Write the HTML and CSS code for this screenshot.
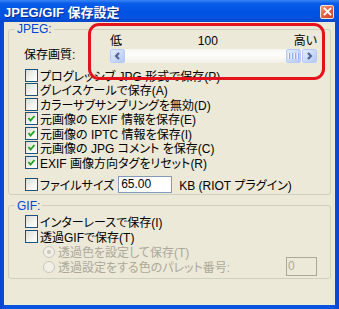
FILE: index.html
```html
<!DOCTYPE html>
<html lang="ja">
<head>
  <meta charset="UTF-8" />
  <title>JPEG/GIF 保存設定</title>
  <link rel="stylesheet" href="styles.css">
</head>
<body>
  <div class="window">
    <div class="titlebar">
      <span class="title">JPEG/GIF 保存設定</span>
      <span class="close">
        <svg width="9" height="9" viewBox="0 0 9 9"><path d="M1.5 1.5 L7.5 7.5 M7.5 1.5 L1.5 7.5" stroke="#fff" stroke-width="1.8" stroke-linecap="square"/></svg>
      </span>
    </div>

    <div class="client">
      <fieldset class="group jpeg">
        <legend>JPEG:</legend>

        <div class="quality">
          <span class="quality-label">保存画質:</span>
          <div class="slider">
            <div class="scale">
              <span>低</span>
              <span>100</span>
              <span>高い</span>
            </div>
            <div class="scrollbar">
              <span class="sb-btn">
                <svg width="7" height="8" viewBox="0 0 7 8"><path d="M5 1 L2 4 L5 7" fill="none" stroke="#4d6185" stroke-width="2"/></svg>
              </span>
              <span class="sb-track"></span>
              <span class="sb-thumb"><i></i><i></i><i></i><i></i></span>
              <span class="sb-btn">
                <svg width="7" height="8" viewBox="0 0 7 8"><path d="M2 1 L5 4 L2 7" fill="none" stroke="#4d6185" stroke-width="2"/></svg>
              </span>
            </div>
          </div>
        </div>

        <div class="check"><span class="box"></span>プログレッシブ JPG 形式で保存(P)</div>
        <div class="check"><span class="box"></span>グレイスケールで保存(A)</div>
        <div class="check"><span class="box"></span>カラーサブサンプリングを無効(D)</div>
        <div class="check"><span class="box checked"><svg width="11" height="11" viewBox="0 0 11 11"><path d="M2.5 5 L4.5 7.5 L8.5 3" fill="none" stroke="#21a121" stroke-width="1.8"/></svg></span>元画像の EXIF 情報を保存(E)</div>
        <div class="check"><span class="box checked"><svg width="11" height="11" viewBox="0 0 11 11"><path d="M2.5 5 L4.5 7.5 L8.5 3" fill="none" stroke="#21a121" stroke-width="1.8"/></svg></span>元画像の IPTC 情報を保存(I)</div>
        <div class="check"><span class="box checked"><svg width="11" height="11" viewBox="0 0 11 11"><path d="M2.5 5 L4.5 7.5 L8.5 3" fill="none" stroke="#21a121" stroke-width="1.8"/></svg></span>元画像の JPG コメント を保存(C)</div>
        <div class="check"><span class="box checked"><svg width="11" height="11" viewBox="0 0 11 11"><path d="M2.5 5 L4.5 7.5 L8.5 3" fill="none" stroke="#21a121" stroke-width="1.8"/></svg></span>EXIF 画像方向タグをリセット(R)</div>
        <div class="check filesize"><span class="box"></span><span>ファイルサイズ</span><span class="textbox">65.00</span><span class="unit">KB (RIOT プラグイン)</span></div>
      </fieldset>

      <fieldset class="group gif">
        <legend>GIF:</legend>
        <div class="check first"><span class="box"></span>インターレースで保存(I)</div>
        <div class="check"><span class="box"></span>透過GIFで保存(T)</div>
        <div class="radio disabled"><span class="dot selected"></span>透過色を設定して保存(T)</div>
        <div class="radio disabled"><span class="dot"></span>透過設定をする色のパレット番号:<span class="textbox small">0</span></div>
      </fieldset>
    </div>

    <div class="annotation"></div>
  </div>
</body>
</html>
```

FILE: styles.css
```css
body {
  margin: 0;
  font-family: "Liberation Sans", "Noto Sans CJK JP", sans-serif;
  font-size: 12px;
  font-feature-settings: "palt";
  color: #000;
  background: #fff;
}

.window {
  width: 339px;
  height: 309px;
  display: flex;
  flex-direction: column;
  position: relative;
  background: linear-gradient(90deg, #0846d0 0%, #0a52e0 2%, #0a52e0 98%, #0846d0 100%);
  box-sizing: border-box;
}

.titlebar {
  height: 22px;
  display: flex;
  align-items: center;
  justify-content: space-between;
  padding: 0 5px 0 4px;
  background: linear-gradient(#3a86f4 0%, #0a5ce9 15%, #0054e3 55%, #0050dc 85%, #0a48c8 100%);
}

.title {
  color: #fff;
  font-size: 13px;
  font-weight: 700;
  text-shadow: 1px 1px 0 #0a2a8a;
}

.close {
  width: 14px;
  height: 14px;
  box-sizing: border-box;
  border: 1px solid #f4e4dc;
  border-radius: 2px;
  background: linear-gradient(135deg, #f0a080 0%, #e0603e 50%, #c8442a 100%);
  display: flex;
  align-items: center;
  justify-content: center;
  margin-top: 1px;
}

.client {
  flex: 1;
  margin: 0 4px 4px 4px;
  background: #ece9d8;
  padding-top: 1px;
}

.group {
  margin: 0 4px 0 4px;
  border: 1px solid #d0d0bf;
  border-radius: 3px;
  padding: 0 13px 1px 6px;
}

.group legend {
  padding: 0 2px;
  line-height: 12px;
  color: #0046d5;
}

.gif {
  margin-top: 5px;
  padding-bottom: 4px;
}

/* quality slider */
.quality {
  display: flex;
  align-items: flex-end;
  padding-left: 9px;
  margin-bottom: 5px;
}

.quality-label {
  width: 86px;
  line-height: 15px;
}

.slider {
  flex: 1;
}

.scale {
  height: 13px;
  line-height: 12px;
  display: flex;
  justify-content: space-between;
}

.scrollbar {
  margin-top: 1px;
  height: 14px;
  display: flex;
  gap: 1px;
  background: linear-gradient(#f7f6f1, #fefefe 40%, #f1efe6);
}

.sb-btn,
.sb-thumb {
  width: 15px;
  height: 14px;
  box-sizing: border-box;
  border: 1px solid #b7caf5;
  border-radius: 2px;
  background: linear-gradient(135deg, #e2ebfe 0%, #c6d6fb 60%, #b4c8f6 100%);
  display: flex;
  align-items: center;
  justify-content: center;
}

.sb-track {
  flex: 1;
}

.sb-thumb {
  gap: 1px;
}

.sb-thumb i {
  width: 1px;
  height: 6px;
  background: #eef4fe;
  box-shadow: 1px 0 0 #8cacf0;
  margin-right: 1px;
}

/* checkboxes */
.check {
  height: 14.5px;
  display: flex;
  align-items: center;
  gap: 2px;
  margin-left: 10px;
  white-space: nowrap;
}

.box {
  width: 13px;
  height: 13px;
  box-sizing: border-box;
  border: 1px solid #1c5180;
  background: linear-gradient(135deg, #dcdcd7 0%, #f4f4f0 60%, #fff 100%);
  display: flex;
  align-items: center;
  justify-content: center;
  flex: none;
}

.filesize {
  height: 17px;
  margin-top: 6px;
}

.textbox {
  flex: none;
  width: 54px;
  height: 17px;
  box-sizing: border-box;
  border: 1px solid #7f9db9;
  background: #fff;
  padding: 0 2px;
  line-height: 15px;
  margin-left: 2px;
}

.unit {
  margin-left: 5px;
}

.gif .check {
  height: 15px;
}

.gif .first {
  margin-top: 2.5px;
}

/* radios */
.radio {
  height: 15px;
  display: flex;
  align-items: center;
  gap: 3px;
  margin-left: 28px;
  white-space: nowrap;
}

.disabled {
  color: #aca899;
}

.dot {
  width: 12px;
  height: 12px;
  box-sizing: border-box;
  border: 1px solid #cac8bb;
  border-radius: 50%;
  background: #f1efe6;
  display: flex;
  align-items: center;
  justify-content: center;
  flex: none;
}

.dot.selected::after {
  content: '';
  width: 4px;
  height: 4px;
  border-radius: 50%;
  background: #cac8bb;
}

.textbox.small {
  width: 31px;
  height: 19px;
  margin-left: auto;
  background: #ece9d8;
  border-color: #aca899;
  color: #aca899;
  line-height: 17px;
  padding: 0 1px;
}

/* red highlight drawn over the slider */
.annotation {
  position: absolute;
  left: 88px;
  top: 23px;
  width: 237px;
  height: 57px;
  box-sizing: border-box;
  border: 3px solid #e3121b;
  border-radius: 11px;
}
```
